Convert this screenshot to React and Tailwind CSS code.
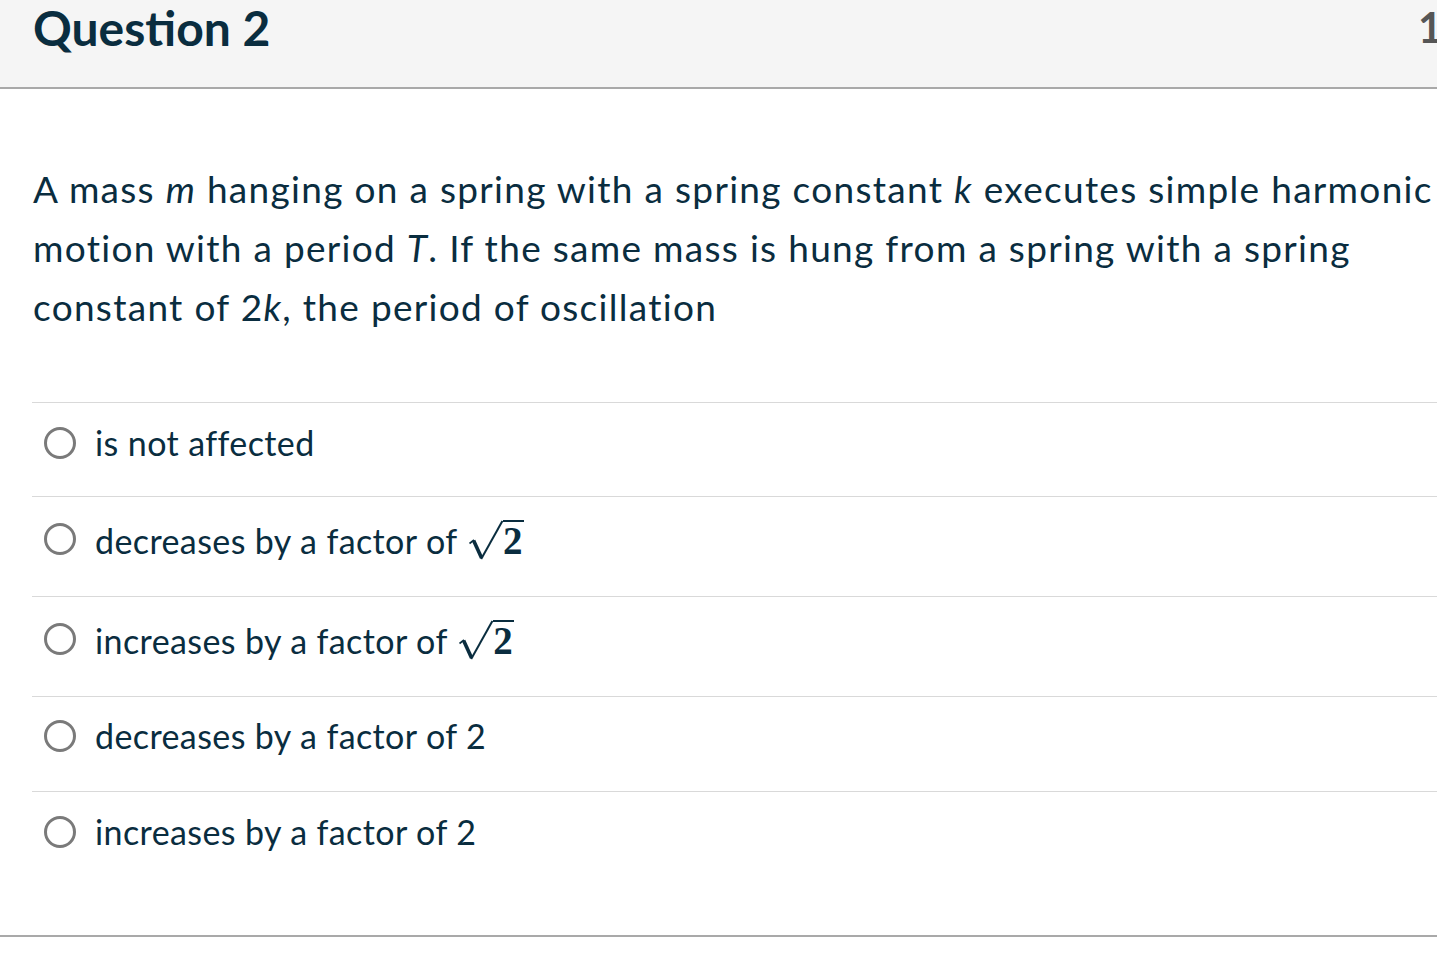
import React from "react";

const ink = "text-[#0a2d3f]";

function Sqrt2() {
  return (
    <>
      <svg
        className="inline-block align-[-7px] ml-[1px]"
        width="36"
        height="43"
        viewBox="0 0 36 43"
        fill="none"
        stroke="#0a2d3f"
        strokeLinecap="butt"
      >
        <line x1="2.5" y1="25.5" x2="7" y2="22" strokeWidth="1.6" />
        <line x1="6.6" y1="22.4" x2="14.6" y2="40" strokeWidth="3.6" />
        <line x1="14.2" y1="41" x2="35.4" y2="3" strokeWidth="2" />
      </svg>
      <span className="inline-block border-t-2 border-[#0a2d3f] pt-[3px] pr-[1px] leading-[32px] text-[39px] tracking-normal font-bold font-['Liberation_Serif',serif]">
        2
      </span>
    </>
  );
}

const answers = [
  { label: "is not affected", h: "h-[94px]", pt: "pt-[14px]", mt: "mt-[10px]" },
  { label: "decreases by a factor of", math: true, h: "h-[100px]", pt: "pt-[18px]", mt: "mt-[8px]" },
  { label: "increases by a factor of", math: true, h: "h-[100px]", pt: "pt-[18px]", mt: "mt-[8px]" },
  { label: "decreases by a factor of 2", h: "h-[95px]", pt: "pt-[13px]", mt: "mt-[10px]" },
  { label: "increases by a factor of 2", h: "h-[95px]", pt: "pt-[14px]", mt: "mt-[10px]" },
];

function Answer({ a }) {
  return (
    <div className={`flex items-start border-t border-[#d9d9d9] ${a.h} ${a.pt}`}>
      <div className={`ml-[12px] w-[32px] h-[32px] shrink-0 rounded-full border-[3px] border-[#7a7a7a] bg-white ${a.mt}`} />
      <div className={`ml-[19px] text-[34px] leading-[51px] tracking-[0.4px] whitespace-nowrap ${ink}`}>
        {a.label}
        {a.math && (
          <>
            {" "}
            <Sqrt2 />
          </>
        )}
      </div>
    </div>
  );
}

export default function App() {
  return (
    <div className="w-full h-[965px] overflow-hidden bg-white font-[Lato,'Liberation_Sans',sans-serif]">
      <div className="w-[1560px]">
        <div className="flex items-start h-[89px] bg-[#f5f5f5] border-b-2 border-[#a9a9a9]">
          <div className={`w-[1418px] shrink-0 pl-[33px] pt-[4px] text-[48px] leading-[48px] font-bold ${ink}`}>
            Question 2
          </div>
          <div className="pt-[6px] text-[42px] leading-[42px] font-bold text-[#565656] whitespace-nowrap">
            1 pts
          </div>
        </div>

        <div className="pl-[32px] pt-[70px] pb-[49px] border-b-2 border-[#a9a9a9]">
          <p className={`w-[1450px] pl-[1px] text-[37px] leading-[59px] tracking-[1.3px] ${ink}`}>
            A mass <i>m</i> hanging on a spring with a spring constant <i>k</i> executes simple
            harmonic motion with a period <i>T</i>. If the same mass is hung from a spring with a
            spring constant of 2<i>k</i>, the period of oscillation
          </p>

          <div className="mt-[66px]">
            {answers.map((a) => (
              <Answer key={a.label} a={a} />
            ))}
          </div>
        </div>
      </div>
    </div>
  );
}
